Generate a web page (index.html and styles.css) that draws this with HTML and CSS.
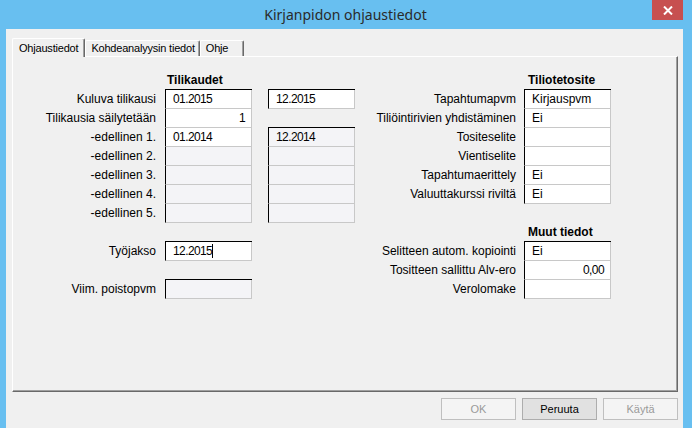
FILE: index.html
```html
<!DOCTYPE html>
<html lang="fi">
<head>
    <meta charset="UTF-8">
    <meta name="viewport" content="width=device-width, initial-scale=1.0">
    <title>Kirjanpidon ohjaustiedot</title>
    <link rel="stylesheet" href="styles.css">
</head>
<body>
<div class="window">
    <div class="titlebar">
        <span class="title">Kirjanpidon ohjaustiedot</span>
        <div class="close">
            <svg width="10" height="9" viewBox="0 0 10 9"><path d="M1 0.5 L9 8.5 M9 0.5 L1 8.5" stroke="#fff" stroke-width="2"/></svg>
        </div>
    </div>
    <div class="client">
        <div class="tabs">
            <div class="tab active">Ohjaustiedot</div>
            <div class="tab">Kohdeanalyysin tiedot</div>
            <div class="tab last">Ohje</div>
        </div>
        <div class="panel">
            <div class="form">
                <!-- headers -->
                <div></div><div class="head">Tilikaudet</div><div></div><div></div><div></div><div class="head right-head">Tiliotetosite</div>

                <div class="label">Kuluva tilikausi</div>
                <div class="cell first num">01.2015</div><div></div>
                <div class="cell first num">12.2015</div>
                <div class="label">Tapahtumapvm</div>
                <div class="cell first">Kirjauspvm</div>

                <div class="label">Tilikausia säilytetään</div>
                <div class="cell num right">1</div><div></div><div></div>
                <div class="label">Tiliöintirivien yhdistäminen</div>
                <div class="cell">Ei</div>

                <div class="label">-edellinen 1.</div>
                <div class="cell num">01.2014</div><div></div>
                <div class="cell first off num">12.2014</div>
                <div class="label">Tositeselite</div>
                <div class="cell"></div>

                <div class="label">-edellinen 2.</div>
                <div class="cell off"></div><div></div>
                <div class="cell off"></div>
                <div class="label">Vientiselite</div>
                <div class="cell"></div>

                <div class="label">-edellinen 3.</div>
                <div class="cell off"></div><div></div>
                <div class="cell off"></div>
                <div class="label">Tapahtumaerittely</div>
                <div class="cell">Ei</div>

                <div class="label">-edellinen 4.</div>
                <div class="cell off"></div><div></div>
                <div class="cell off"></div>
                <div class="label">Valuuttakurssi riviltä</div>
                <div class="cell">Ei</div>

                <div class="label">-edellinen 5.</div>
                <div class="cell off"></div><div></div>
                <div class="cell off"></div>
                <div></div><div></div>

                <div></div><div></div><div></div><div></div><div></div><div class="head right-head">Muut tiedot</div>

                <div class="label">Työjakso</div>
                <div class="cell first num"><span class="caret">12.2015</span></div><div></div><div></div>
                <div class="label">Selitteen autom. kopiointi</div>
                <div class="cell first">Ei</div>

                <div></div><div></div><div></div><div></div>
                <div class="label">Tositteen sallittu Alv-ero</div>
                <div class="cell num right">0,00</div>

                <div class="label">Viim. poistopvm</div>
                <div class="cell first off"></div><div></div><div></div>
                <div class="label">Verolomake</div>
                <div class="cell"></div>
            </div>
        </div>
        <div class="buttons">
            <button disabled>OK</button>
            <button>Peruuta</button>
            <button disabled>Käytä</button>
        </div>
    </div>
</div>
</body>
</html>
```

FILE: styles.css
```css
body {
    margin: 0;
    font-family: "Liberation Sans", Arial, sans-serif;
    font-size: 12px;
    color: #000;
}
.window {
    height: 428px;
    background-color: #68bff0;
    padding: 0 9px 0 6px;
    display: flex;
    flex-direction: column;
    overflow: hidden;
}
.titlebar {
    height: 29px;
    position: relative;
    display: flex;
    align-items: center;
    justify-content: center;
}
.title {
    font-family: "Noto Sans", sans-serif;
    font-size: 14px;
    color: #2a2a2a;
    margin-top: -1px;
    margin-left: 2px;
}
.close {
    position: absolute;
    top: 0;
    right: 0;
    width: 31px;
    height: 20px;
    background-color: #c75050;
    display: flex;
    align-items: center;
    justify-content: center;
}
.client {
    flex: 1;
    background-color: #f0f0f0;
    padding: 9px 5px 0 6px;
}
.tabs {
    display: flex;
    align-items: flex-end;
    height: 18px;
}
.tab {
    height: 16px;
    box-sizing: border-box;
    padding: 0 4px 0 5px;
    font-size: 11px;
    letter-spacing: -0.2px;
    line-height: 15px;
    border-top: 1px solid #fff;
    border-left: 1px solid #fff;
    border-right: 1px solid #696969;
    box-shadow: inset -1px 0 0 #a0a0a0;
    border-radius: 2px 2px 0 0;
}
.tab.active {
    height: 19px;
    margin-bottom: -1px;
    position: relative;
    background-color: #f0f0f0;
    padding: 2px 6px 0 6px;
}
.tab.last {
    padding-right: 15px;
}
.panel {
    height: 336px;
    box-sizing: border-box;
    border-top: 1px solid #fff;
    border-left: 1px solid #fff;
    border-right: 1px solid #696969;
    border-bottom: 1px solid #696969;
    box-shadow: inset -1px -1px 0 #a0a0a0;
    padding-top: 14px;
}
.form {
    display: grid;
    grid-template-columns: 152px 87px 16px 87px 169px 87px;
    grid-auto-rows: 19px;
}
.head {
    font-weight: bold;
    line-height: 19px;
    padding-left: 2px;
}
.right-head {
    padding-left: 4px;
}
.label {
    text-align: right;
    padding-right: 9px;
    line-height: 19px;
    white-space: nowrap;
}
.form > .label:nth-child(6n+5) {
    padding-right: 8px;
}
.cell {
    box-sizing: border-box;
    height: 19px;
    background-color: #fff;
    border-left: 1px solid #000;
    border-right: 1px solid #c8c8c8;
    border-bottom: 1px solid #c8c8c8;
    padding: 0 6px 0 7px;
    line-height: 18px;
}
.cell.first {
    box-shadow: 0 -1px 0 #000;
}
.cell.off {
    background-color: #f4f4f7;
}
.cell.num {
    letter-spacing: -0.6px;
}
.cell.right {
    text-align: right;
}
.caret {
    border-right: 1px solid #000;
}
.buttons {
    display: flex;
    justify-content: flex-end;
    gap: 6px;
    margin-top: 6px;
}
button {
    width: 75px;
    height: 22px;
    font-family: "Liberation Sans", Arial, sans-serif;
    font-size: 11px;
    color: #000;
    background-color: #e1e1e1;
    border: 1px solid #adadad;
    padding: 0;
}
button:disabled {
    background-color: #f4f4f4;
    border-color: #bfbfbf;
    color: #9a9a9a;
}
```
